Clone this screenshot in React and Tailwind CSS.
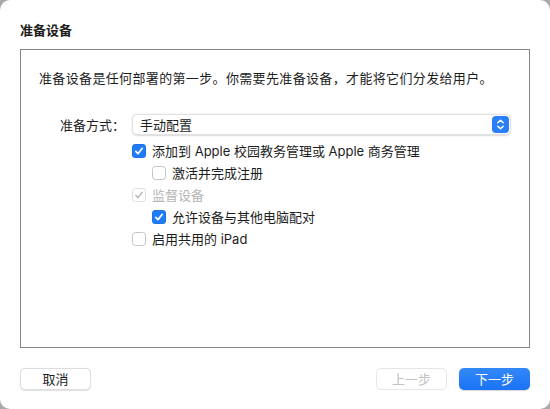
import React from "react";

const font = { fontFamily: '"Inter", "Noto Sans CJK SC", sans-serif' };

function Check({ checked = false, disabled = false }) {
  if (checked && !disabled) {
    return (
      <span className="w-[14px] h-[14px] rounded-[3.5px] bg-[#1f7bf6] flex items-center justify-center shrink-0 shadow-[inset_0_0_0_0.5px_rgba(0,0,0,0.12)]">
        <svg width="10" height="10" viewBox="0 0 10 10" fill="none">
          <path d="M1.8 5.3 L4 7.6 L8.3 2.3" stroke="white" strokeWidth="1.7" strokeLinecap="round" strokeLinejoin="round" />
        </svg>
      </span>
    );
  }
  if (checked && disabled) {
    return (
      <span className="w-[14px] h-[14px] rounded-[3.5px] bg-white border border-[#dcdcdc] flex items-center justify-center shrink-0">
        <svg width="10" height="10" viewBox="0 0 10 10" fill="none">
          <path d="M1.8 5.3 L4 7.6 L8.3 2.3" stroke="#b9b9b9" strokeWidth="1.5" strokeLinecap="round" strokeLinejoin="round" />
        </svg>
      </span>
    );
  }
  return <span className="w-[14px] h-[14px] rounded-[3.5px] bg-white border border-[#c4c4c4] shrink-0" />;
}

function Option({ label, checked, disabled, indent }) {
  return (
    <div className={`flex items-center h-[22px] gap-[6px] ${indent ? "pl-[20px]" : ""}`}>
      <Check checked={checked} disabled={disabled} />
      <span className={`text-[13px] leading-[16px] ${disabled ? "text-[#b5b5b5]" : "text-[#1d1d1d]"}`}>{label}</span>
    </div>
  );
}

export default function App() {
  return (
    <div className="w-[550px] h-[409px] bg-[#a9a9a9]" style={font}>
      <div className="h-full bg-white rounded-[10px] flex flex-col px-5">
        <div className="pt-[22px] text-[13px] leading-[16px] font-bold text-[#1d1d1d]">准备设备</div>

        <div className="mt-[11px] h-[299px] border border-[#858585] pl-[18px] pr-[18px] pt-[19px]">
          <p className="text-[13px] leading-[18px] tracking-[0.35px] text-[#1d1d1d]">
            准备设备是任何部署的第一步。你需要先准备设备，才能将它们分发给用户。
          </p>

          <div className="mt-[27px] flex items-center">
            <span className="w-[86px] text-right text-[13px] leading-[16px] text-[#1d1d1d]">准备方式：</span>
            <div className="ml-[7px] flex-1 h-[21px] rounded-[5px] bg-white border border-[#e2e2e2] shadow-[0_0.5px_1.5px_rgba(0,0,0,0.15)] flex items-center pl-[7px] pr-[1px]">
              <span className="flex-1 text-[13px] leading-[16px] text-[#1d1d1d]">手动配置</span>
              <span className="w-[17px] h-[17px] rounded-[4px] bg-[#2a7ff6] flex items-center justify-center">
                <svg width="9" height="13" viewBox="0 0 9 13" fill="none">
                  <path d="M1.8 4.8 L4.5 2.2 L7.2 4.8" stroke="white" strokeWidth="1.5" strokeLinecap="round" strokeLinejoin="round" />
                  <path d="M1.8 8.2 L4.5 10.8 L7.2 8.2" stroke="white" strokeWidth="1.5" strokeLinecap="round" strokeLinejoin="round" />
                </svg>
              </span>
            </div>
          </div>

          <div className="mt-[5px] ml-[93px] flex flex-col">
            <Option label="添加到 Apple 校园教务管理或 Apple 商务管理" checked />
            <Option label="激活并完成注册" indent />
            <Option label="监督设备" checked disabled />
            <Option label="允许设备与其他电脑配对" checked indent />
            <Option label="启用共用的 iPad" />
          </div>
        </div>

        <div className="mt-[20px] flex items-center">
          <button className="w-[71px] h-[22px] rounded-[5px] bg-white border border-[#dedede] shadow-[0_0.5px_1px_rgba(0,0,0,0.12)] text-[13px] leading-[16px] text-[#1d1d1d]">
            取消
          </button>
          <div className="flex-1" />
          <button className="w-[71px] h-[22px] rounded-[5px] bg-white border border-[#e6e6e6] text-[13px] leading-[16px] text-[#c2c2c2]">
            上一步
          </button>
          <button className="ml-[12px] w-[71px] h-[22px] rounded-[5px] bg-gradient-to-b from-[#3388f8] to-[#1a72f5] text-[13px] leading-[16px] text-white shadow-[0_0.5px_1px_rgba(0,0,0,0.15)]">
            下一步
          </button>
        </div>
      </div>
    </div>
  );
}
